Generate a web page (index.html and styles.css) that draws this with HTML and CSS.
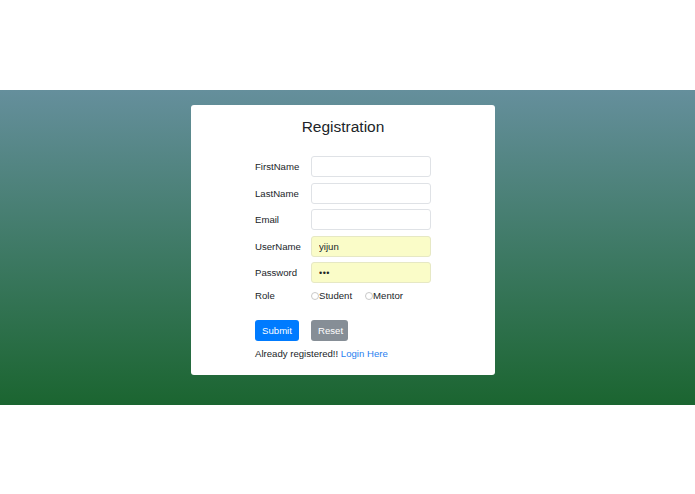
FILE: index.html
```html
<!DOCTYPE html>
<html>
<head>
<meta charset="utf-8">
<link rel="stylesheet" href="styles.css">
</head>
<body>
<div class="band">
  <div class="card">
    <h1 class="title">Registration</h1>
    <form class="form">
      <label class="lbl">FirstName</label><input class="field" type="text">
      <label class="lbl">LastName</label><input class="field" type="text">
      <label class="lbl">Email</label><input class="field" type="text">
      <label class="lbl">UserName</label><input class="field auto" type="text" value="yijun">
      <label class="lbl">Password</label><div class="field auto pw">&#8226;&#8226;&#8226;</div>
      <label class="lbl role">Role</label>
      <div class="radios">
        <span class="opt"><span class="radio"></span>Student</span>
        <span class="opt"><span class="radio"></span>Mentor</span>
      </div>
      <div class="btns">
        <button class="btn primary" type="button">Submit</button>
        <button class="btn secondary" type="button">Reset</button>
      </div>
      <p class="already">Already registered!! <a class="link" href="#">Login Here</a></p>
    </form>
  </div>
</div>
</body>
</html>
```
FILE: styles.css
```css
html, body {
  margin: 0;
  padding: 0;
  background: #ffffff;
}
body {
  font-family: "Liberation Sans", Arial, sans-serif;
  color: #212529;
  padding-top: 90px;
  height: 494px;
  box-sizing: border-box;
}
.band {
  height: 315px;
  background: linear-gradient(to bottom, #658f9c 0%, #3f7a66 50%, #1b6530 100%);
  padding-top: 15px;
  box-sizing: border-box;
}
.card {
  width: 304px;
  height: 270px;
  margin-left: 191px;
  background: #ffffff;
  border-radius: 3px;
  box-sizing: border-box;
  padding-top: 12px;
}
.title {
  margin: 0;
  text-align: center;
  font-weight: 400;
  font-size: 15.5px;
  line-height: 20px;
  color: #212529;
}
.form {
  margin: 19px 0 0 64px;
  display: grid;
  grid-template-columns: 56px 120px;
  grid-auto-rows: 21px;
  row-gap: 5.5px;
  font-size: 9.6px;
}
.lbl {
  display: flex;
  align-items: center;
}
.field {
  box-sizing: border-box;
  width: 120px;
  height: 21px;
  border: 1px solid #dfe2e6;
  border-radius: 3px;
  background: #fff;
  font-family: inherit;
  font-size: 9.6px;
  padding: 0 7px;
  margin: 0;
  color: #212529;
  outline: none;
}
.auto {
  background: #fafcc8;
  border-color: #e6e8c4;
}
.pw {
  display: flex;
  align-items: center;
  font-size: 9px;
  letter-spacing: 0.5px;
  padding-top: 1px;
}
.role {
  height: 14px;
  align-self: start;
}
.radios {
  display: flex;
  align-items: center;
  gap: 13px;
  height: 14px;
  align-self: start;
}
.opt {
  display: flex;
  align-items: center;
}
.radio {
  width: 8px;
  height: 8px;
  border: 1px solid #c9c9c9;
  border-radius: 50%;
  box-sizing: border-box;
  background: #fff;
}
.btns {
  grid-column: 1 / span 2;
  display: grid;
  grid-template-columns: 56px auto;
  justify-items: start;
  margin-top: 5px;
}
.btn {
  height: 21px;
  border: none;
  border-radius: 3px;
  color: #fff;
  font-family: inherit;
  font-size: 9.6px;
  padding: 0 7px;
  margin: 0;
}
.primary {
  background: #007bff;
  width: 44px;
}
.secondary {
  background: #868e96;
  width: 37px;
}
.already {
  grid-column: 1 / span 2;
  margin: 4px 0 0 0;
  display: flex;
  align-items: center;
  height: 16px;
  white-space: pre;
  align-self: start;
}
.link {
  color: #2a7ff0;
  text-decoration: none;
}
```
